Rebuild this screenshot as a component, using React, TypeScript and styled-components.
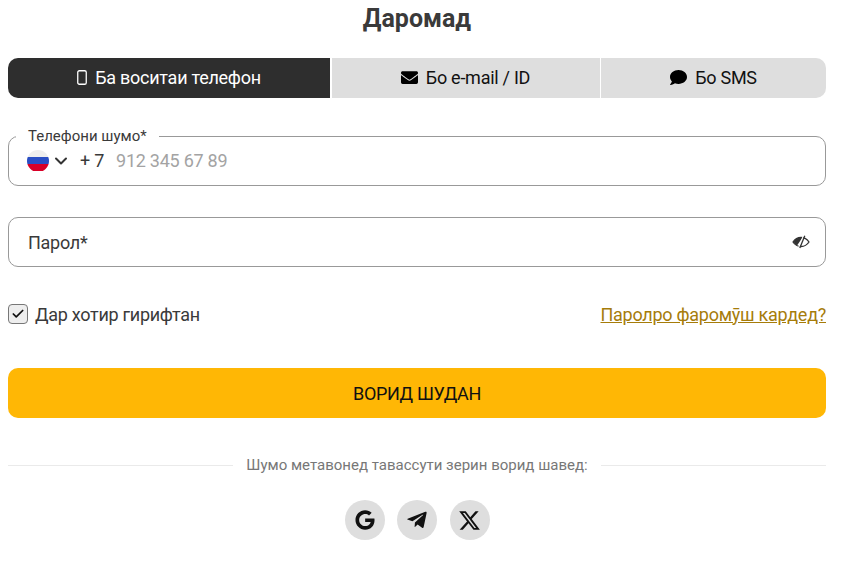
import React from 'react';
import styled, { createGlobalStyle } from 'styled-components';
import { FaEnvelope, FaComment, FaGoogle, FaTelegramPlane } from 'react-icons/fa';
import { FaXTwitter } from 'react-icons/fa6';
import { FiChevronDown, FiCheck } from 'react-icons/fi';

const GlobalStyle = createGlobalStyle`
  html, body {
    margin: 0;
    padding: 0;
    background: #fff;
    font-family: Roboto, "Liberation Sans", sans-serif;
    color: #3a3a3a;
  }
  * {
    box-sizing: border-box;
  }
`;

const MobileIcon = () => (
  <svg width="10" height="15" viewBox="0 0 10 15" fill="none">
    <rect x="0.75" y="0.75" width="8.5" height="13.5" rx="1.6" stroke="#fff" strokeWidth="1.3" />
  </svg>
);

const EyeOffIcon = () => (
  <svg width="18" height="14" viewBox="0 0 18 14" fill="none">
    <path d="M1 7C3 4 5.800 2.500 9 2.500S15 4 17 7c-2 3-4.800 4.500-8 4.500S3 10 1 7Z" stroke="#333" strokeWidth="1.3" />
    <path d="M9 2.500C5.800 2.500 3 4 1.500 7c1 1.500 2.400 2.800 3.500 3.600L10.500 2.600Z" fill="#333" />
    <path d="M11.500 .8 6.500 13" stroke="#fff" strokeWidth="1.2" />
    <path d="M12.800 .8 7.800 13" stroke="#333" strokeWidth="1.3" />
  </svg>
);

const App: React.FC = () => {
  return (
    <Page>
      <GlobalStyle />
      <Title>Даромад</Title>
      <Tabs>
        <Tab $active $basis={322}>
          <MobileIcon />
          Ба воситаи телефон
        </Tab>
        <Tab $basis={268}>
          <FaEnvelope size={17} color="#000" />
          Бо e-mail / ID
        </Tab>
        <Tab $basis={225}>
          <FaComment size={17} color="#000" />
          Бо SMS
        </Tab>
      </Tabs>

      <PhoneField>
        <FieldLegend>Телефони шумо*</FieldLegend>
        <PhoneRow>
          <Flag>
            <FlagStripe $color="#eeeeee" />
            <FlagStripe $color="#2a4fc4" />
            <FlagStripe $color="#d80027" />
          </Flag>
          <FiChevronDown size={20} color="#333" strokeWidth={2.4} />
          <Prefix>+ 7</Prefix>
          <Placeholder>912 345 67 89</Placeholder>
        </PhoneRow>
      </PhoneField>

      <PasswordField>
        <span>Парол*</span>
        <EyeOffIcon />
      </PasswordField>

      <OptionsRow>
        <Remember>
          <CheckBox>
            <FiCheck size={14} color="#111" strokeWidth={3} />
          </CheckBox>
          Дар хотир гирифтан
        </Remember>
        <ForgotLink href="#">Паролро фаромӯш кардед?</ForgotLink>
      </OptionsRow>

      <SubmitButton>ВОРИД ШУДАН</SubmitButton>

      <Divider>
        <DividerLine />
        <DividerText>Шумо метавонед тавассути зерин ворид шавед:</DividerText>
        <DividerLine />
      </Divider>

      <Socials>
        <SocialButton>
          <FaGoogle size={20} />
        </SocialButton>
        <SocialButton>
          <FaTelegramPlane size={22} />
        </SocialButton>
        <SocialButton>
          <FaXTwitter size={23} />
        </SocialButton>
      </Socials>
    </Page>
  );
};

const Page = styled.div`
  width: 841px;
  height: 573px;
  overflow: hidden;
  padding: 0 15px 0 8px;
  display: flex;
  flex-direction: column;
`;

const Title = styled.h1`
  margin: 0;
  height: 38px;
  line-height: 38px;
  font-size: 25px;
  font-weight: 700;
  text-align: center;
  color: #3a3a3a;
`;

const Tabs = styled.div`
  display: flex;
  margin-top: 20px;
  height: 40px;
  gap: 1.5px;
  border-radius: 10px;
  overflow: hidden;
`;

const Tab = styled.div<{ $active?: boolean; $basis: number }>`
  flex: ${(p) => p.$basis} 1 0;
  display: flex;
  align-items: center;
  justify-content: center;
  gap: 8px;
  padding-bottom: 1px;
  font-size: 18px;
  letter-spacing: -0.26px;
  background: ${(p) => (p.$active ? '#2e2e2e' : '#dedede')};
  color: ${(p) => (p.$active ? '#fff' : '#111')};
`;

const PhoneField = styled.fieldset`
  margin: 30px 0 0;
  padding: 0 19px;
  height: 58px;
  border: 1px solid #999;
  border-radius: 10px;
  display: block;
  min-width: 0;
`;

const FieldLegend = styled.legend`
  margin-left: -12px;
  padding: 0 12px;
  font-size: 15px;
  line-height: 16px;
  color: #3a3a3a;
`;

const PhoneRow = styled.div`
  display: flex;
  align-items: center;
  height: 33px;
`;

const Flag = styled.div`
  width: 22px;
  height: 22px;
  border-radius: 50%;
  overflow: hidden;
  display: flex;
  flex-direction: column;
  margin-left: -1px;
  margin-right: 2px;
`;

const FlagStripe = styled.div<{ $color: string }>`
  flex: 1;
  background: ${(p) => p.$color};
`;

const Prefix = styled.span`
  margin-left: 9px;
  font-size: 18px;
  letter-spacing: -0.26px;
  color: #3a3a3a;
`;

const Placeholder = styled.span`
  margin-left: 12px;
  font-size: 18px;
  letter-spacing: -0.25px;
  color: #a3a3a3;
`;

const PasswordField = styled.div`
  margin-top: 31px;
  height: 50px;
  border: 1px solid #999;
  border-radius: 10px;
  padding: 0 15px 0 19px;
  display: flex;
  align-items: center;
  justify-content: space-between;
  font-size: 18px;
  letter-spacing: -0.26px;
  color: #3a3a3a;
`;

const OptionsRow = styled.div`
  margin-top: 36px;
  height: 22px;
  display: flex;
  align-items: center;
  justify-content: space-between;
`;

const Remember = styled.label`
  display: flex;
  align-items: center;
  gap: 7px;
  font-size: 18px;
  letter-spacing: -0.28px;
  color: #3a3a3a;
`;

const CheckBox = styled.span`
  width: 20px;
  height: 20px;
  border: 1.5px solid #777;
  border-radius: 4px;
  background: #eee;
  display: flex;
  align-items: center;
  justify-content: center;
`;

const ForgotLink = styled.a`
  font-size: 18px;
  letter-spacing: -0.26px;
  color: #a67c0a;
  text-decoration: underline;
`;

const SubmitButton = styled.button`
  margin-top: 43px;
  height: 50px;
  width: 100%;
  border: none;
  border-radius: 10px;
  background: #ffb705;
  color: #111;
  font-family: inherit;
  font-size: 18px;
  letter-spacing: -0.36px;
`;

const Divider = styled.div`
  margin-top: 38px;
  height: 18px;
  display: flex;
  align-items: center;
  gap: 13px;
`;

const DividerLine = styled.div`
  flex: 1;
  height: 1px;
  background: #eaeaea;
`;

const DividerText = styled.span`
  font-size: 15px;
  color: #777;
`;

const Socials = styled.div`
  margin-top: 26px;
  display: flex;
  justify-content: center;
  gap: 12.5px;
`;

const SocialButton = styled.div`
  width: 40px;
  height: 40px;
  border-radius: 50%;
  background: #dedede;
  color: #111;
  display: flex;
  align-items: center;
  justify-content: center;
`;

export default App;
